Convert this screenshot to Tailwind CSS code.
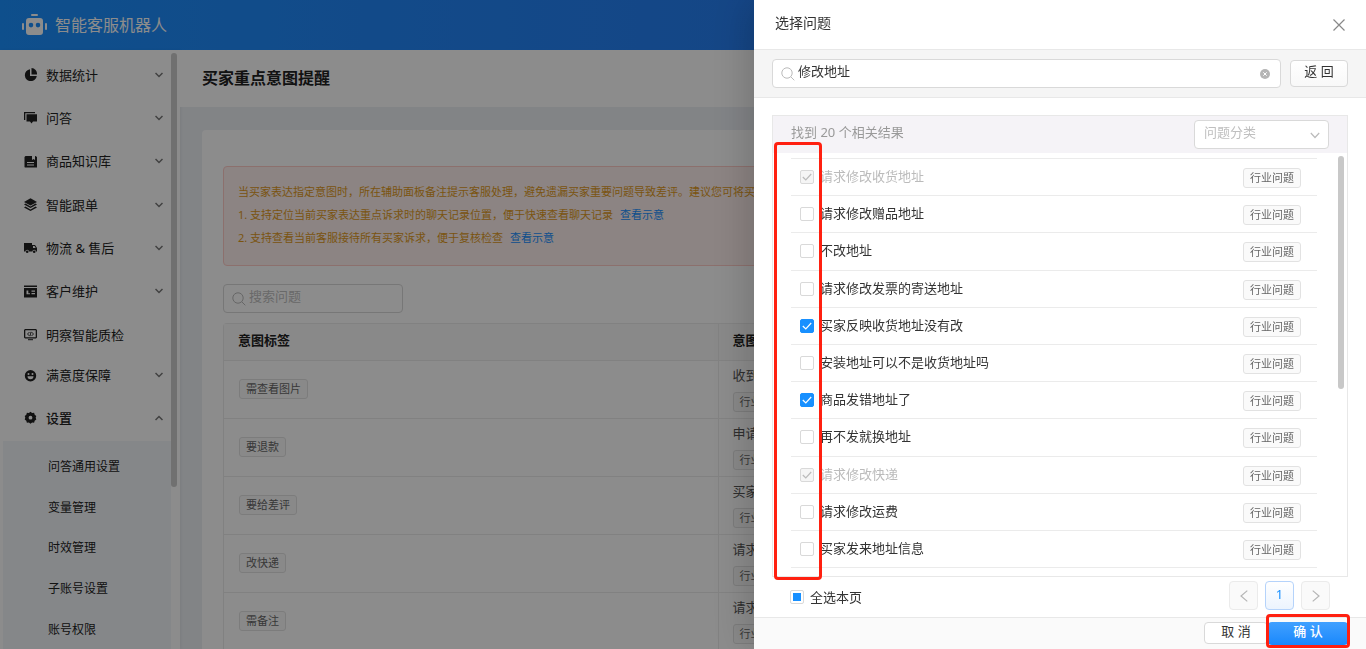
<!DOCTYPE html>
<html lang="zh-CN">
<head>
<meta charset="utf-8">
<meta name="viewport" content="width=device-width, initial-scale=1">
<title>智能客服机器人</title>
<script src="https://cdn.jsdelivr.net/npm/@tailwindcss/browser@4"></script>
</head>
<body class="h-screen overflow-hidden bg-[#edf0f5] font-['Noto_Sans','Noto_Sans_CJK_SC',sans-serif] text-[13px] leading-5 text-[#333]">

<div class="flex h-screen flex-col">
  <header class="flex h-[50px] shrink-0 items-center gap-2 bg-linear-to-r from-[#1b90ff] to-[#2d72ec] pl-[22px] text-white">
    <svg class="h-[22px] w-[25px]" viewBox="0 0 25 22" fill="currentColor" aria-hidden="true">
      <rect x="9" y="0" width="7" height="2" rx="1"/>
      <path fill-rule="evenodd" d="M7 4h11a3 3 0 0 1 3 3v11a3 3 0 0 1-3 3H7a3 3 0 0 1-3-3V7a3 3 0 0 1 3-3Zm2 4.800a2.300 2.300 0 1 0 0 4.600 2.300 2.300 0 0 0 0-4.600Zm7 0a2.300 2.300 0 1 0 0 4.600 2.300 2.300 0 0 0 0-4.600Z"/>
      <rect x="0" y="9" width="2" height="7" rx="1"/><rect x="23" y="9" width="2" height="7" rx="1"/>
    </svg>
    <span class="text-[16px] leading-6">智能客服机器人</span>
  </header>

  <div class="flex min-h-0 flex-1">
    <aside class="flex w-[180px] shrink-0 bg-white pt-[3px] shadow-[1px_0_3px_rgba(0,0,0,0.06)]">
      <nav class="min-w-0 flex-1 overflow-hidden">
        <div id="menu" class="flex h-[260px] flex-col"></div>
        <div id="menu-rest"></div>
        <div class="ml-[3px] flex h-[210px] flex-col bg-[#f3f6fa] pt-1.5 pb-px pl-[45px] text-xs text-[#222]">
          <a href="#" class="flex flex-1 items-center">问答通用设置</a>
          <a href="#" class="flex flex-1 items-center">变量管理</a>
          <a href="#" class="flex flex-1 items-center">时效管理</a>
          <a href="#" class="flex flex-1 items-center">子账号设置</a>
          <a href="#" class="flex flex-1 items-center">账号权限</a>
        </div>
      </nav>
      <div class="mr-[3px] h-[434px] w-1.5 rounded-full bg-[#ccc]"></div>
    </aside>

    <main class="min-w-0 flex-1 overflow-hidden">
      <h1 class="flex h-[57px] items-center bg-white pb-0.5 pl-[22px] text-[16px] leading-6 font-semibold text-[#222]">买家重点意图提醒</h1>
      <section class="mx-[22px] mt-[23px] rounded bg-white px-[21px] pt-9 pb-9">
        <div class="overflow-hidden rounded border border-[#ffccc7] bg-[#fff0ee] pt-[13px] pb-4 pl-3.5 text-[11px] leading-[23px] whitespace-nowrap text-[#e09a1c]">
          <p>当买家表达指定意图时，所在辅助面板备注提示客服处理，避免遗漏买家重要问题导致差评。建议您可将买家</p>
          <p>1. 支持定位当前买家表达重点诉求时的聊天记录位置，便于快速查看聊天记录 <a href="#" class="ml-1 text-[#1890ff]">查看示意</a></p>
          <p>2. 支持查看当前客服接待所有买家诉求，便于复核检查 <a href="#" class="ml-1 text-[#1890ff]">查看示意</a></p>
        </div>
        <label class="mt-[18px] flex h-[29px] w-[180px] items-center gap-[3px] rounded border border-[#d9d9d9] pl-2">
          <svg class="size-3.5 shrink-0 text-[#bbb]" viewBox="0 0 14 14" fill="none" stroke="currentColor" aria-hidden="true"><circle cx="6" cy="6" r="5.200"/><path d="m9.800 9.800 3.500 3.500"/></svg>
          <input type="text" aria-label="搜索问题" placeholder="搜索问题" class="mb-1.5 w-full min-w-0 outline-none placeholder:text-[#bfbfbf]">
        </label>
        <table class="mt-2.5 w-full table-fixed border-separate border-spacing-0 rounded-t border-t border-l border-[#ececec] text-left">
          <thead>
            <tr class="h-[37px] bg-[#fafafa] text-[#222]">
              <th class="w-[45%] border-r border-b border-[#ececec] pb-1 pl-3.5 font-semibold">意图标签</th>
              <th class="border-b border-[#ececec] pb-1 pl-3.5 font-semibold">意图</th>
            </tr>
          </thead>
          <tbody id="intents"></tbody>
        </table>
      </section>
    </main>
  </div>
</div>

<div class="fixed inset-0 bg-black/45"></div>

<section role="dialog" aria-labelledby="dialog-title" class="fixed inset-y-0 right-0 flex w-[612px] max-w-full flex-col bg-white shadow-[-4px_0_40px_rgba(0,0,0,0.2)]">
  <header class="flex h-[50px] shrink-0 items-center justify-between border-b border-[#e8e8e8] pr-5 pl-[21px]">
    <h2 id="dialog-title" class="mb-1 text-sm text-[#333]">选择问题</h2>
    <button type="button" aria-label="关闭" class="text-[#888]">
      <svg class="size-3.5" viewBox="0 0 14 14" fill="none" stroke="currentColor" stroke-width="1.200"><path d="m1.500 1.500 11 11m0-11-11 11"/></svg>
    </button>
  </header>

  <div class="flex h-12 shrink-0 items-center gap-[9px] border-b border-[#e8e8e8] bg-[#f5f5f5] px-[18px]">
    <label class="flex h-[29px] flex-1 items-center gap-[3px] rounded border border-[#d9d9d9] bg-white pr-2.5 pl-2">
      <svg class="size-3.5 shrink-0 text-[#bbb]" viewBox="0 0 14 14" fill="none" stroke="currentColor" aria-hidden="true"><circle cx="6" cy="6" r="5.200"/><path d="m9.800 9.800 3.500 3.500"/></svg>
      <input type="text" aria-label="搜索" value="修改地址" class="mb-1.5 min-w-0 flex-1 outline-none">
      <svg class="size-2.5 shrink-0" viewBox="0 0 10 10" aria-hidden="true"><circle cx="5" cy="5" r="5" fill="#b5b5b5"/><path d="m3.300 3.300 3.400 3.400m0-3.400L3.300 6.700" stroke="#fff"/></svg>
    </label>
    <button type="button" class="h-[27px] w-[58px] rounded border border-[#d9d9d9] bg-linear-to-b from-white to-[#f8f8f8] pb-1.5 leading-[18px]">返 回</button>
  </div>

  <div class="mx-[18px] mt-[17px] flex min-h-0 flex-1 flex-col border border-[#e8e8e8]">
    <div class="flex h-[37px] shrink-0 items-center justify-between bg-[#f5f3f7] pr-[18px] pl-[18px] text-[#999]">
      <p class="mb-1.5">找到 20 个相关结果</p>
      <div class="grid h-[29px] w-[135px] items-center">
        <select aria-label="问题分类" class="col-start-1 row-start-1 h-[29px] w-full appearance-none rounded border border-[#d9d9d9] bg-white pb-1.5 pl-[9px] text-[#bfbfbf]"><option>问题分类</option></select>
        <svg class="pointer-events-none col-start-1 row-start-1 mr-[9px] size-2.5 justify-self-end" viewBox="0 0 10 10" fill="none" stroke="#bbb" stroke-width="1.200"><path d="m.800 3 4.200 4.500L9.200 3"/></svg>
      </div>
    </div>
    <div class="flex min-h-0 flex-1 justify-between pr-[3px] pb-2 pl-[18px]">
      <ul id="questions" class="mt-[5px] mr-[21px] flex flex-1 flex-col border-t border-[#ebebeb]"></ul>
      <div class="mt-[3px] h-[233px] w-1.5 rounded-full bg-[#c8c8c8]"></div>
    </div>
  </div>

  <div class="flex h-10 shrink-0 items-center justify-between pr-9 pl-9">
    <label class="flex items-center gap-1.5">
      <span class="grid place-items-center">
        <input id="select-page" type="checkbox" class="col-start-1 row-start-1 size-3.5 appearance-none rounded-xs border border-[#d9d9d9] bg-white">
        <span class="pointer-events-none col-start-1 row-start-1 size-2 bg-[#1890ff]"></span>
      </span>
      全选本页
    </label>
    <div class="mb-[3px] flex gap-[7px]">
      <button type="button" aria-label="上一页" class="grid size-[29px] place-items-center rounded border border-[#ebebeb] bg-[#fafafa]"><svg class="h-3 w-2" viewBox="0 0 8 12" fill="none" stroke="#b5b5b5" stroke-width="1.200"><path d="M7.300.600 1 6l6.300 5.400"/></svg></button>
      <button type="button" class="size-[29px] rounded border border-[#b5d3fb] bg-linear-to-b from-white to-[#ecf4fe] pb-1 text-[#1890ff]">1</button>
      <button type="button" aria-label="下一页" class="grid size-[29px] place-items-center rounded border border-[#ebebeb] bg-[#fafafa]"><svg class="h-3 w-2" viewBox="0 0 8 12" fill="none" stroke="#b5b5b5" stroke-width="1.200"><path d="M.700.600 7 6 .700 11.400"/></svg></button>
    </div>
  </div>

  <footer class="flex h-8 shrink-0 items-start justify-end border-t border-[#e8e8e8] bg-[#fafafa] pt-1 pr-[18px]">
    <button type="button" class="h-[22px] w-16 rounded border border-[#d9d9d9] bg-white pb-1 leading-4">取 消</button>
    <button type="button" class="h-[23px] w-20 rounded bg-linear-to-b from-[#40a0ff] to-[#1688fc] pb-1.5 leading-4 font-medium text-white">确 认</button>
  </footer>

  <!-- highlight frames -->
  <div class="pointer-events-none absolute top-[142px] left-5 h-[438px] w-12 rounded border-[3px] border-[#ff2010]"></div>
  <div class="pointer-events-none absolute right-4 bottom-px h-[34px] w-[84px] rounded border-[3px] border-[#ff2010]"></div>
</section>

<script>
const icons = {
  pie: '<path d="M6 1.200A6 6 0 1 0 12.800 8H6Z"/><path d="M7.500 0v6.500H13A6 6 0 0 0 7.500 0Z"/>',
  chat: '<path d="M0 1h11v1.200H1.300V9H0Z"/><path d="M2.500 3.200H13v7.300H9L7.500 12.500 6 10.500H2.500Z"/>',
  book: '<path fill-rule="evenodd" d="M1.500 1H8v4l1.500-1L11 5V1h.500L13 2v10.500H1A1 1 0 0 1 .500 12V2ZM3 7v1h7V7Zm0 2.500v1h7v-1Z"/>',
  layers: '<path d="M6.500.300 13 4 6.500 7.500 0 4Z"/><path d="m0 6.400 1.500-.800 5 2.800 5-2.800 1.500.800L6.500 10Z"/><path d="m0 9.400 1.500-.800 5 2.800 5-2.800 1.500.800L6.500 13Z"/>',
  truck: '<path fill-rule="evenodd" d="M0 2h8v2h3l2 3v3.500h-1a1.800 1.800 0 0 0-3.600 0H5a1.800 1.800 0 0 0-3.600 0H0ZM9 5v2h2.700l-1.200-2Z"/><circle cx="3.200" cy="10.700" r="1.300"/><circle cx="10.200" cy="10.700" r="1.300"/>',
  card: '<path d="M0 .500h13V2H0Z"/><path fill-rule="evenodd" d="M0 3h13v9.500H0Zm2.500 2.500v3.800H6v-1H4.300V5.500Zm5 0v1.200H11V5.500Zm0 2.500v1.200H11V8Z"/>',
  monitor: '<path fill-rule="evenodd" d="M1 1h11l1 1v7.500l-1 1H1l-1-1V2Zm.300 1.300v6.900h10.400V2.300Z"/><path d="M4 11.200h5v1H4Z"/><path d="m5.500 4-2 2 2 2M7.500 4l2 2-2 2M7 3.800 6 8.200" fill="none" stroke="currentColor" stroke-width=".900"/>',
  smile: '<path fill-rule="evenodd" d="M6.500 1a5.700 5.700 0 1 0 0 11.400 5.700 5.700 0 0 0 0-11.400ZM4.500 4a1 1 0 1 1 0 2 1 1 0 0 1 0-2Zm4 0a1 1 0 1 1 0 2 1 1 0 0 1 0-2ZM3.500 7.200h6a3 3 0 0 1-6 0Z"/>',
  gear: '<path fill-rule="evenodd" d="m6.500.700 1.600 1.200 2-.100.600 1.900 1.600 1.200L11.700 6.700l.600 1.900-1.600 1.200-.600 1.900-2-.100-1.600 1.200-1.600-1.200-2 .100-.600-1.900L.700 8.600l.600-1.900-.600-1.800 1.600-1.200.600-1.900 2 .100Zm0 4.100a1.900 1.900 0 1 0 0 3.800 1.900 1.900 0 0 0 0-3.800Z"/>'
};
const chevron = up => `<svg class="h-2 w-2 text-[#777]" viewBox="0 0 8 8" fill="none" stroke="currentColor" stroke-width="1.500"><path d="${up ? 'M.500 6 4 2.500 7.500 6' : 'M.500 2 4 5.500 7.500 2'}"/></svg>`;
const item = (icon, text, size, arrow) => `<a href="#" class="flex items-center pl-6 pr-2 text-[#222] ${size}">
  <svg class="size-[13px] shrink-0" viewBox="0 0 13 13" fill="currentColor">${icons[icon]}</svg>
  <span class="ml-[9px] flex-1">${text}</span>${arrow}</a>`;

document.getElementById('menu').innerHTML = [
  ['pie', '数据统计'], ['chat', '问答'], ['book', '商品知识库'],
  ['layers', '智能跟单'], ['truck', '物流 &amp; 售后'], ['card', '客户维护']
].map(([i, t]) => item(i, t, 'flex-1', chevron(false))).join('');
document.getElementById('menu-rest').innerHTML =
  item('monitor', '明察智能质检', 'h-[43px]', '') +
  item('smile', '满意度保障', 'h-[38px]', chevron(false)) +
  item('gear', '设置', 'h-[47px] font-medium', chevron(true));

const tag = t => `<span class="inline-block h-5 rounded-[3px] border border-[#e2e2e2] bg-[#fafafa] px-1.5 text-[11px] leading-[18px] text-[#666]">${t}</span>`;

document.getElementById('intents').innerHTML = [
  ['需查看图片', '收到'], ['要退款', '申请'], ['要给差评', '买家'], ['改快递', '请求'], ['需备注', '请求']
].map(([a, b]) => `<tr class="h-[58px] text-[#555]">
  <td class="border-r border-b border-[#ececec] pb-0.5 pl-[15px]"><div class="flex">${tag(a)}</div></td>
  <td class="border-b border-[#ececec] pb-0.5 pl-3.5"><div class="mb-[7px]">${b}</div><div class="flex">${tag('行业问题')}</div></td></tr>`).join('');

document.getElementById('questions').innerHTML = [
  ['请求修改收货地址', 'checked disabled'], ['请求修改赠品地址', ''], ['不改地址', ''],
  ['请求修改发票的寄送地址', ''], ['买家反映收货地址没有改', 'checked'], ['安装地址可以不是收货地址吗', ''],
  ['商品发错地址了', 'checked'], ['再不发就换地址', ''], ['请求修改快递', 'checked disabled'],
  ['请求修改运费', ''], ['买家发来地址信息', '']
].map(([t, s]) => `<li class="flex flex-1 items-center justify-between border-b border-[#ebebeb] pr-4 pl-[9px]">
  <label class="flex items-center gap-1.5 has-disabled:text-[#bbb]">
    <span class="grid place-items-center">
      <input type="checkbox" ${s} class="peer col-start-1 row-start-1 size-3.5 appearance-none rounded-xs border border-[#d9d9d9] bg-white checked:border-[#1890ff] checked:bg-[#1890ff] disabled:border-[#d9d9d9] disabled:bg-[#f5f5f5]">
      <svg class="pointer-events-none invisible col-start-1 row-start-1 size-2.5 text-white peer-checked:visible peer-disabled:text-[#bbb]" viewBox="0 0 10 10" fill="none" stroke="currentColor" stroke-width="1.200"><path d="m.800 5 3 3L9.200 2"/></svg>
    </span>
    <span class="mb-0.5">${t}</span>
  </label>
  <span class="mt-0.5 flex">${tag('行业问题')}</span></li>`).join('');

document.getElementById('select-page').indeterminate = true;
</script>
</body>
</html>
